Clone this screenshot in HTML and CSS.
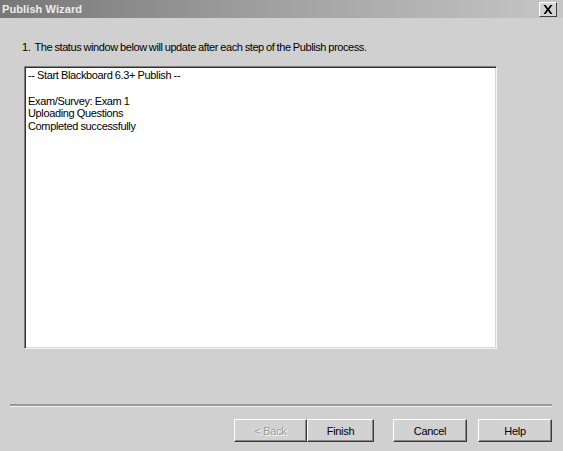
FILE: index.html
```html
<!DOCTYPE html>
<html>
<head>
<meta charset="utf-8">
<link rel="stylesheet" href="styles.css">
</head>
<body>
<div class="dialog">
  <div class="titlebar">
    <span class="title">Publish Wizard</span>
    <span class="close"><svg width="10" height="9" viewBox="0 0 10 9"><path d="M0.5 0h2.2L5 3.2 7.3 0h2.2L6.2 4.5 9.5 9H7.3L5 5.8 2.7 9H0.5l3.3-4.5z" fill="#000"/></svg></span>
  </div>
  <div class="content">
    <p class="instr">1.&nbsp; The status window below will update after each step of the Publish process.</p>
    <div class="status">
      <div class="line">-- Start Blackboard 6.3+ Publish --</div>
      <div class="line">&nbsp;</div>
      <div class="line">Exam/Survey: Exam 1</div>
      <div class="line">Uploading Questions</div>
      <div class="line">Completed successfully</div>
    </div>
  </div>
  <div class="sep"></div>
  <div class="buttons">
    <div class="pair">
      <button class="btn back disabled">&lt; Back</button>
      <button class="btn finish">Finish</button>
    </div>
    <button class="btn">Cancel</button>
    <button class="btn">Help</button>
  </div>
</div>
</body>
</html>
```
FILE: styles.css
```css
html, body {
  margin: 0;
  padding: 0;
  background: #d0d0d0;
}
.dialog {
  width: 563px;
  height: 451px;
  background: #d0d0d0;
  font-family: "Liberation Sans", Arial, sans-serif;
  font-size: 11px;
  color: #000;
  display: flex;
  flex-direction: column;
}
.titlebar {
  height: 18px;
  background: linear-gradient(to right, #777 0%, #9a9a9a 40%, #c6c6c6 100%);
  display: flex;
  align-items: center;
  justify-content: space-between;
  padding: 0 6px 0 2px;
}
.title {
  color: #ececec;
  font-weight: bold;
  font-size: 11px;
  letter-spacing: 0.1px;
}
.close {
  width: 18px;
  height: 15px;
  box-sizing: border-box;
  background: #d4d4d4;
  border-style: solid;
  border-width: 1px;
  border-color: #fff #404040 #404040 #fff;
  display: flex;
  align-items: center;
  justify-content: center;
}
.content {
  padding: 0 0 0 24px;
}
.instr {
  margin: 22px 0 0 -2px;
  height: 14px;
  line-height: 14px;
  letter-spacing: -0.4px;
  word-spacing: -0.5px;
}
.status {
  margin-top: 12px;
  width: 473px;
  height: 283px;
  box-sizing: border-box;
  background: #fff;
  border-style: solid;
  border-width: 1px;
  border-color: #808080 #f4f4f4 #f4f4f4 #808080;
  box-shadow: inset 1px 1px 0 #303030, inset -1px -1px 0 #d8d8d8;
  padding: 2px 0 0 3px;
  letter-spacing: -0.35px;
  word-spacing: -0.3px;
}
.line {
  height: 12.8px;
  line-height: 13px;
  white-space: nowrap;
}
.sep {
  margin: 55px 11px 0 10px;
  height: 0;
  border-top: 2px solid #999;
  border-bottom: 1px solid #f2f2f2;
}
.buttons {
  margin-top: 12px;
  display: flex;
  justify-content: flex-end;
  gap: 11px;
  padding-right: 11px;
}
.pair {
  display: flex;
  margin-right: 8px;
}
.btn {
  width: 74px;
  height: 23px;
  box-sizing: border-box;
  background: #d2d2d2;
  font-family: "Liberation Sans", Arial, sans-serif;
  font-size: 11px;
  letter-spacing: -0.3px;
  color: #000;
  padding: 0;
  border-style: solid;
  border-width: 1px;
  border-color: #fff #3a3a3a #3a3a3a #fff;
  box-shadow: inset -1px -1px 0 #888;
}
.btn.back {
  width: 73px;
}
.btn.finish {
  width: 67px;
}
.btn.disabled {
  color: #9a9a9a;
  text-shadow: 1px 1px 0 #fff;
}
```
